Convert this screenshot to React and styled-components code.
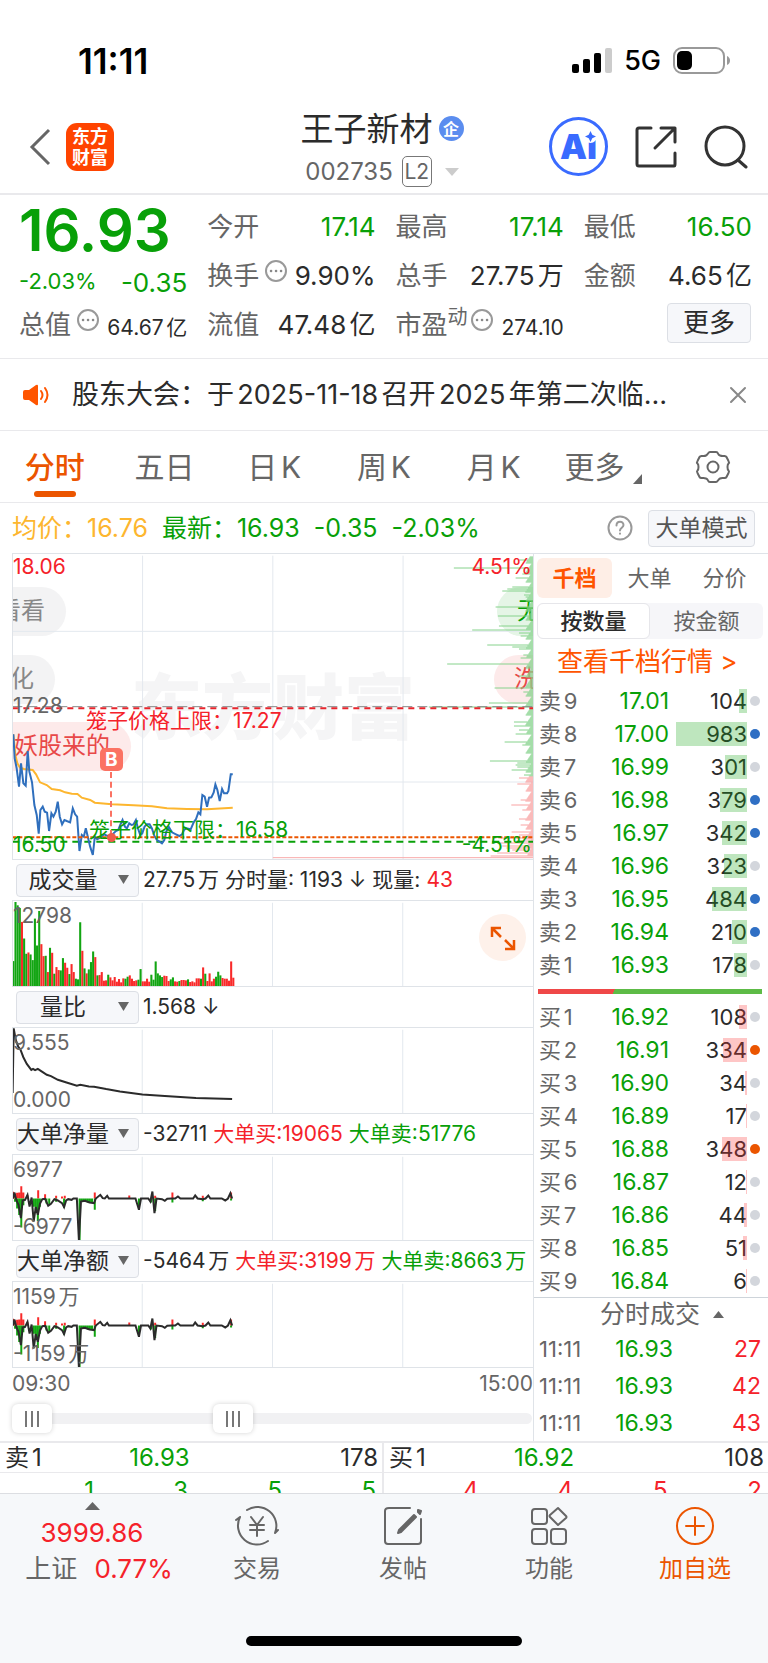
import React from "react";
import styled, { createGlobalStyle, css } from "styled-components";

const GREEN = "#08a008";
const RED = "#f5222a";
const ORANGE = "#eb5500";
const INK = "#2b2b2b";
const MUTED = "#666666";
const LINE = "#e9e9ec";

const Global = createGlobalStyle`
  *, *::before, *::after { box-sizing: border-box; }
  body {
    margin: 0;
    background: #fff;
    color: ${INK};
    font-family: Inter, "Noto Sans CJK SC", sans-serif;
    text-autospace: normal;
  }
  button, input, select { font: inherit; color: inherit; margin: 0; }
  button { border: 0; padding: 0; background: none; cursor: pointer; }
  a { color: inherit; text-decoration: none; }
`;

const Page = styled.div`
  display: flex;
  flex-direction: column;
  overflow: hidden;
`;

/* ---------- status bar ---------- */

const StatusBar = styled.div`
  display: flex;
  align-items: center;
  justify-content: space-between;
  height: 106px;
  padding: 16px 38px 0 78px;
  color: #000;
`;

const Clock = styled.time`
  font-size: 35px;
  line-height: 40px;
  font-weight: 600;
`;

const StatusIcons = styled.div`
  display: flex;
  align-items: center;
  gap: 12px;
  font-size: 27px;
  line-height: 32px;
  font-weight: 500;
`;

/* ---------- header ---------- */

const Header = styled.header`
  display: grid;
  grid-template-columns: 1fr auto 1fr;
  align-items: center;
  height: 89px;
  padding: 0 20px;
  border-bottom: 2px solid ${LINE};
`;

const HeaderSide = styled.div`
  display: flex;
  align-items: center;
  gap: ${(p) => p.$gap}px;
  justify-content: ${(p) => (p.$end ? "flex-end" : "flex-start")};
  padding: ${(p) => (p.$end ? "0 0 6px" : "0 0 6px 8px")};
`;

const IconButton = styled.button`
  display: flex;
  align-items: center;
  justify-content: center;
`;

const Logo = styled.a`
  display: flex;
  align-items: center;
  justify-content: center;
  width: 48px;
  height: 48px;
  border-radius: 11px;
  background: #ff4400;
  color: #fff;
  font-size: 18px;
  line-height: 21px;
  font-weight: 700;
  text-align: center;
`;

const TitleBlock = styled.div`
  display: flex;
  flex-direction: column;
  align-items: center;
  padding-right: 4px;
`;

const StockName = styled.h1`
  display: flex;
  align-items: center;
  gap: 6px;
  margin: 0;
  font-size: 33px;
  line-height: 44px;
  font-weight: 400;
`;

const CompanyBadge = styled.span`
  display: flex;
  align-items: center;
  justify-content: center;
  width: 25px;
  height: 25px;
  border-radius: 50%;
  background: #5b8def;
  color: #fff;
  font-size: 16px;
  line-height: 24px;
  font-weight: 700;
`;

const StockCode = styled.button`
  display: flex;
  align-items: center;
  gap: 9px;
  color: ${MUTED};
  font-size: 24px;
  line-height: 32px;
  height: 42px;
`;

const LevelTag = styled.span`
  width: 30px;
  height: 31px;
  border: 1px solid #777;
  border-radius: 5px;
  font-size: 21px;
  line-height: 29px;
  text-align: center;
`;

const CodeArrow = styled.svg`
  margin-left: 4px;
`;

const AiButton = styled.button`
  position: relative;
  width: 59px;
  height: 59px;
  border: 3px solid #3a6bff;
  border-radius: 50%;
  color: #3a6bff;
  font-size: 34px;
  line-height: 53px;
  font-weight: 900;
  svg {
    position: absolute;
    top: 10px;
    right: 8px;
  }
`;

/* ---------- quote ---------- */

const Quote = styled.section`
  display: grid;
  grid-template-columns: repeat(4, minmax(0, 1fr));
  grid-auto-rows: 49px;
  column-gap: 20px;
  padding: 7px 16px 9px 19px;
  border-bottom: 1px solid ${LINE};
`;

const Price = styled.div`
  padding-top: 4px;
  color: ${GREEN};
  font-size: 58px;
  line-height: 49px;
  font-weight: 600;
`;

const Change = styled.div`
  display: flex;
  align-items: center;
  justify-content: space-between;
  padding-top: 10px;
  color: ${GREEN};
  font-size: 22px;
  line-height: 32px;
`;

const BigChange = styled.span`
  padding-top: 4px;
  font-size: 26px;
`;

const Stat = styled.div`
  display: flex;
  align-items: center;
  justify-content: space-between;
  font-size: 26px;
  line-height: 40px;
  white-space: nowrap;
`;

const StatLabel = styled.span`
  display: flex;
  align-items: center;
  color: ${MUTED};
  svg { margin: 0 0 10px 5px; }
  small {
    font-size: 20px;
    line-height: 24px;
    margin-bottom: 16px;
  }
  small + svg { margin-left: 2px; }
`;

const StatValue = styled.span`
  color: ${(p) => (p.$down ? GREEN : INK)};
  ${(p) =>
    p.$small &&
    css`
      padding-top: 6px;
      font-size: 21px;
    `}
`;

const MoreButton = styled.button`
  justify-self: end;
  align-self: center;
  width: 84px;
  height: 40px;
  margin: 0 1px 4px 0;
  border: 1px solid #dcdfe5;
  border-radius: 4px;
  background: #f6f7fa;
  font-size: 26px;
  line-height: 36px;
`;

/* ---------- notice ---------- */

const Notice = styled.section`
  display: flex;
  align-items: center;
  height: 72px;
  padding: 0 20px 0 22px;
  border-bottom: 1px solid ${LINE};
`;

const NoticeText = styled.a`
  flex: 1;
  min-width: 0;
  margin: 0 58px 0 22px;
  overflow: hidden;
  white-space: nowrap;
  text-overflow: ellipsis;
  font-size: 27px;
  line-height: 40px;
`;

/* ---------- period tabs ---------- */

const Periods = styled.nav`
  display: grid;
  grid-template-columns: repeat(7, 1fr);
  justify-items: center;
  align-items: center;
  height: 72px;
  border-bottom: 1px solid ${LINE};
`;

const Period = styled.button`
  position: relative;
  display: flex;
  align-items: center;
  gap: 9px;
  color: ${(p) => (p.$active ? ORANGE : MUTED)};
  font-size: 30px;
  font-weight: ${(p) => (p.$active ? 500 : 400)};
  line-height: 66px;
  &::after {
    content: ${(p) => (p.$active ? '""' : "none")};
    position: absolute;
    left: 50%;
    bottom: 3px;
    width: 42px;
    height: 6px;
    margin-left: -21px;
    border-radius: 3px;
    background: ${ORANGE};
  }
`;

const CornerMark = styled.svg`
  margin-top: 24px;
`;

const Averages = styled.div`
  display: flex;
  align-items: center;
  height: 50px;
  padding: 0 13px 0 12px;
  color: ${GREEN};
  font-size: 25px;
  line-height: 36px;
`;

const AverageItem = styled.span`
  margin-right: 14px;
  color: ${(p) => (p.$average ? "#fdb62f" : GREEN)};
`;

const HelpButton = styled(IconButton)`
  margin: 0 15px 0 auto;
`;

const ModeButton = styled.button`
  width: 107px;
  height: 37px;
  border: 1px solid #dcdfe5;
  border-radius: 4px;
  background: #f6f7fa;
  color: #555;
  font-size: 23px;
  line-height: 34px;
  white-space: nowrap;
`;

/* ---------- body ---------- */

const Body = styled.main`
  display: flex;
  align-items: stretch;
`;

const Charts = styled.section`
  flex: 1;
  min-width: 0;
  padding-left: 12px;
`;

const ChartBox = styled.div`
  position: relative;
  height: ${(p) => p.$height}px;
  overflow: hidden;
  border: solid #dfe3e8;
  border-width: 1px 0 1px 1px;
`;

const ChartSvg = styled.svg`
  position: relative;
  display: block;
  width: 100%;
  height: 100%;
  path, line, polyline { vector-effect: non-scaling-stroke; fill: none; }
`;

const AxisLabel = styled.span`
  position: absolute;
  ${(p) => (p.$right ? "right: 1px;" : "left: 0;")}
  top: ${(p) => p.$top}px;
  color: ${(p) => p.$color || MUTED};
  font-size: 21px;
  line-height: 24px;
  white-space: nowrap;
`;

const CageLabel = styled(AxisLabel)`
  left: ${(p) => p.$left}px;
`;

const Watermark = styled.span`
  position: absolute;
  left: 50%;
  top: 113px;
  margin-left: -142px;
  color: #f5f5f6;
  font-size: 71px;
  line-height: 80px;
  font-weight: 900;
  white-space: nowrap;
`;

const Bullet = styled.span`
  position: absolute;
  top: ${(p) => p.$top}px;
  ${(p) => (p.$right ? "right: 0;" : "left: 0;")}
  width: ${(p) => p.$width}px;
  height: 49px;
  overflow: hidden;
  display: flex;
  justify-content: ${(p) => (p.$right ? "flex-start" : "flex-end")};
  padding: ${(p) => (p.$right ? "0 0 0 20px" : "0 21px 0 0")};
  border-radius: ${(p) => (p.$right ? "25px 0 0 25px" : "0 25px 25px 0")};
  background: ${(p) => p.$bg};
  color: ${(p) => p.$color};
  font-size: 24px;
  line-height: 48px;
  white-space: nowrap;
`;

const BuyMark = styled.span`
  position: absolute;
  left: 19%;
  top: 194px;
  width: 23px;
  height: 23px;
  margin-left: -12px;
  border-radius: 5px;
  background: #fb7263;
  color: #fff;
  font-size: 19px;
  line-height: 23px;
  font-weight: 700;
  text-align: center;
  &::before {
    content: "";
    position: absolute;
    left: 10px;
    top: 24px;
    height: 64px;
    border-left: 2px dashed #fb7263;
  }
  &::after {
    content: "";
    position: absolute;
    left: 7px;
    top: 85px;
    width: 9px;
    height: 9px;
    border-radius: 50%;
    background: #f05a4a;
  }
`;

const IndicatorBar = styled.div`
  display: flex;
  align-items: center;
  height: 40px;
  padding-left: 4px;
  font-size: 21px;
  line-height: 30px;
  white-space: nowrap;
`;

const SelectWrap = styled.label`
  position: relative;
  flex: none;
  width: 123px;
  height: 33px;
  margin-right: 4px;
  svg {
    position: absolute;
    right: 10px;
    top: 11px;
    pointer-events: none;
  }
`;

const Select = styled.select`
  appearance: none;
  width: 100%;
  height: 100%;
  padding: 0 29px 0 0;
  border: 1px solid #dcdfe5;
  border-radius: 4px;
  background: #f6f7fa;
  font-size: 23px;
  line-height: 30px;
  text-align-last: center;
`;

const Reading = styled.span`
  margin-right: 6px;
  color: ${(p) => p.$color || INK};
`;

const ExpandButton = styled(IconButton)`
  position: absolute;
  right: 7px;
  top: 13px;
  width: 47px;
  height: 47px;
  border-radius: 50%;
  background: #fef1ea;
`;

const TimeAxis = styled.div`
  display: flex;
  justify-content: space-between;
  color: ${MUTED};
  font-size: 21px;
  line-height: 32px;
`;

const RangeTrack = styled.div`
  position: relative;
  height: 29px;
  margin: 4px 1px 6px 0;
  &::before {
    content: "";
    position: absolute;
    inset: 9px 0 9px 0;
    border-radius: 6px;
    background: #f1f1f3;
  }
`;

const RangeInput = styled.input`
  appearance: none;
  position: absolute;
  inset: 0;
  width: 100%;
  height: 29px;
  background: none;
  pointer-events: none;
  &::-webkit-slider-thumb {
    appearance: none;
    pointer-events: auto;
    width: 40px;
    height: 29px;
    border-radius: 6px;
    box-shadow: 0 0 5px rgba(0, 0, 0, 0.18);
    background:
      linear-gradient(#777, #777) 13px 7px / 2px 16px no-repeat,
      linear-gradient(#777, #777) 19px 7px / 2px 16px no-repeat,
      linear-gradient(#777, #777) 25px 7px / 2px 16px no-repeat,
      #fff;
  }
`;

/* ---------- order book ---------- */

const Book = styled.aside`
  flex: none;
  width: 235px;
  border-left: 1px solid #dfe3e8;
  border-top: 1px solid #dfe3e8;
`;

const BookTabs = styled.div`
  display: grid;
  grid-template-columns: repeat(3, 75px);
  justify-content: space-between;
  padding: 4px 9px 5px 3px;
`;

const BookTab = styled.button`
  height: 40px;
  border-radius: 6px;
  background: ${(p) => (p.$active ? "#feeee6" : "none")};
  color: ${(p) => (p.$active ? "#ff5500" : MUTED)};
  font-size: 22px;
  font-weight: ${(p) => (p.$active ? 700 : 400)};
  line-height: 38px;
`;

const Toggle = styled.div`
  display: grid;
  grid-template-columns: 1fr 1fr;
  height: 36px;
  margin: 0 5px 0 3px;
  border-radius: 6px;
  background: #f6f6f9;
`;

const ToggleButton = styled.button`
  border: 1px solid ${(p) => (p.$active ? "#e6e6ea" : "transparent")};
  border-radius: 6px;
  background: ${(p) => (p.$active ? "#fff" : "none")};
  color: ${(p) => (p.$active ? INK : MUTED)};
  font-size: 22px;
  font-weight: ${(p) => (p.$active ? 500 : 400)};
  line-height: 32px;
`;

const DepthLink = styled.a`
  display: block;
  padding-left: 23px;
  color: #ff5500;
  font-size: 26px;
  line-height: 45px;
  white-space: nowrap;
`;

const BookTable = styled.table`
  width: 100%;
  border-collapse: collapse;
  table-layout: fixed;
  font-size: 22px;
  line-height: 32px;
  td, th { padding: 0; font-weight: 400; text-align: right; height: ${(p) => p.$row}px; }
`;

const LevelCell = styled.th`
  width: 52px;
  padding-left: 5px !important;
  text-align: left !important;
  color: ${MUTED};
  white-space: nowrap;
`;

const PriceCell = styled.td`
  width: ${(p) => p.$width}px;
  color: ${GREEN};
  font-size: 23px;
`;

const DotCell = styled.td`
  width: 21px;
  &::after {
    content: "";
    display: block;
    width: 10px;
    height: 10px;
    margin-left: 3px;
    border-radius: 50%;
    background: ${(p) => p.$color};
  }
`;

const Quantity = styled.div`
  position: relative;
  height: 24px;
  line-height: 24px;
`;

const QuantityBar = styled.i`
  position: absolute;
  top: 0;
  right: 0;
  height: 24px;
  background: ${(p) => (p.$sell ? "rgba(20, 165, 20, 0.28)" : "rgba(250, 50, 50, 0.28)")};
`;

const Ratio = styled.div`
  height: 5px;
  margin: 8px 6px 6px 4px;
  background: linear-gradient(120deg, #ef4848 34%, #5dbb46 34%);
`;

const TradesHeader = styled.button`
  display: flex;
  align-items: center;
  justify-content: center;
  gap: 13px;
  width: 100%;
  height: 33px;
  padding-left: 22px;
  border-top: 1px solid #ced4da;
  color: ${MUTED};
  font-size: 25px;
  line-height: 30px;
`;

const TradeQty = styled.td`
  padding-right: 7px !important;
  color: ${RED};
  font-size: 23px;
`;

/* ---------- best quotes ---------- */

const Best = styled.section`
  display: grid;
  grid-template-columns: 1fr 1fr;
  border-top: 2px solid ${LINE};
`;

const BestSide = styled.div`
  border-right: ${(p) => (p.$divider ? `2px solid ${LINE}` : "0")};
`;

const BestRow = styled.div`
  display: grid;
  grid-template-columns: 1fr 1fr 1fr;
  padding: 0 4px 0 5px;
  border-bottom: 1px solid ${LINE};
  font-size: 24px;
  line-height: 29px;
  span:nth-child(2) { color: ${GREEN}; }
  span:last-child { text-align: right; }
`;

const QueueRow = styled.div`
  display: grid;
  grid-template-columns: repeat(4, 1fr);
  height: 20px;
  padding-right: 6px;
  overflow: hidden;
  color: ${(p) => p.$color};
  font-size: 24px;
  line-height: 36px;
  text-align: right;
`;

/* ---------- bottom bar ---------- */

const BottomBar = styled.footer`
  border-top: 1px solid #dcdee2;
  background: #f6f8fa;
`;

const Actions = styled.nav`
  display: grid;
  grid-template-columns: 184fr 146fr 146fr 146fr 146fr;
  height: 142px;
  align-items: start;
`;

const Action = styled.button`
  display: flex;
  flex-direction: column;
  align-items: center;
  padding-top: 10px;
  color: ${(p) => (p.$accent ? ORANGE : MUTED)};
  font-size: 24px;
  line-height: 36px;
  svg { margin-bottom: 3px; }
`;

const IndexSummary = styled.button`
  display: flex;
  flex-direction: column;
  align-items: center;
  padding-top: 8px;
  color: ${RED};
  font-size: 26px;
  line-height: 36px;
`;

const IndexValue = styled.span`
  margin: 6px 0 1px;
  line-height: 34px;
`;

const IndexChange = styled.span`
  padding-left: 14px;
`;

const IndexName = styled.span`
  margin-right: 14px;
  color: ${MUTED};
`;

const HomeIndicator = styled.div`
  width: 36%;
  height: 10px;
  margin: 0 auto 17px;
  border-radius: 5px;
  background: #000;
`;

/* ---------- icons ---------- */

const Stroke = ({ size, width = 2, children, ...rest }) => (
  <svg
    width={size}
    height={size}
    viewBox={`0 0 ${size} ${size}`}
    fill="none"
    stroke="currentColor"
    strokeWidth={width}
    strokeLinecap="round"
    strokeLinejoin="round"
    aria-hidden="true"
    {...rest}
  >
    {children}
  </svg>
);

const BackIcon = () => (
  <svg width="24" height="38" viewBox="0 0 24 38" fill="none" stroke="#666" strokeWidth="3" aria-hidden="true">
    <path d="M21 2 4 19l17 17" />
  </svg>
);

const SignalIcon = () => (
  <svg width="40" height="26" viewBox="0 0 40 26" aria-hidden="true">
    <rect x="0" y="16" width="7" height="9" rx="2" />
    <rect x="11" y="11" width="7" height="14" rx="2" />
    <rect x="22" y="5" width="7" height="20" rx="2" />
    <rect x="33" y="0" width="7" height="25" rx="2" fill="#ccc" />
  </svg>
);

const BatteryIcon = () => (
  <svg width="57" height="28" viewBox="0 0 57 28" aria-hidden="true">
    <rect x="1" y="1" width="50" height="25" rx="8" fill="none" stroke="#999" strokeWidth="2" />
    <rect x="4" y="4" width="15" height="19" rx="5" />
    <path d="M54 9q3 1.500 3 4.500t-3 4.500z" fill="#999" />
  </svg>
);

const ShareIcon = () => (
  <Stroke size={42} width={3}>
    <path d="M16 2H4q-2 0-2 2v34q0 2 2 2h35q1 0 1-2V27M26 2h14v14M39 3 20 22" stroke="#333" />
  </Stroke>
);

const SearchIcon = () => (
  <Stroke size={44} width={3}>
    <circle cx="21" cy="21" r="19" stroke="#333" />
    <path d="m34 35 8 7" stroke="#333" />
  </Stroke>
);

const InfoIcon = () => (
  <Stroke size={24} width={2}>
    <circle cx="12" cy="12" r="10" stroke="#999" />
    <path d="M7 12h.1M12 12h.1M17 12h.1" stroke="#888" strokeWidth="2.500" />
  </Stroke>
);

const SpeakerIcon = () => (
  <svg width="28" height="24" viewBox="0 0 28 24" aria-hidden="true">
    <path d="M1 9q0-2 2-2h4l7-5q2-1 2 1v18q0 2-2 1l-7-5H3q-2 0-2-2z" fill="#ff5500" />
    <path d="M19 8q3 4 0 8M23 5q5 7 0 14" fill="none" stroke="#ff5500" strokeWidth="2" strokeLinecap="round" />
  </svg>
);

const CloseIcon = () => (
  <Stroke size={20} width={2}>
    <path d="m3 3 14 14M17 3 3 17" stroke="#888" />
  </Stroke>
);

const GearIcon = () => (
  <Stroke size={36} width={2}>
    <path d="M15 3h6q1.500 0 2 1.500t2 2 2.500.5h2q1.500 0 2 1l2 4q1 1.500 0 2.500t-1 3.500 1 3.500 0 2.500l-2 4q-.5 1-2 1h-2q-1.500 0-2.500.5t-2 2T21 33h-6q-1.500 0-2-1.500t-2-2-2.500-.5h-2q-1.500 0-2-1l-2-4q-1-1.500 0-2.500t1-3.500-1-3.500 0-2.500l2-4q.5-1 2-1h2q1.500 0 2.500-.5t2-2T15 3z" />
    <circle cx="18" cy="18" r="5.500" />
  </Stroke>
);

const HelpIcon = () => (
  <Stroke size={26} width={2}>
    <circle cx="13" cy="13" r="11.500" stroke="#999" />
    <path d="M9.500 10.500c0-5 7-5 7-.5 0 2.500-3.500 3-3.500 5.500M13 18.500v.2" stroke="#999" />
  </Stroke>
);

const ExpandIcon = () => (
  <svg width="26" height="26" viewBox="0 0 26 26" fill="none" stroke={ORANGE} strokeWidth="2.500" aria-hidden="true">
    <path d="M2 12V3h9M3 4l8 8M24 15v9h-9M23 23l-8-8" />
  </svg>
);

const Triangle = ({ up, width = 11, height = 9, color = MUTED }) => (
  <svg width={width} height={height} viewBox="0 0 10 8" preserveAspectRatio="none" aria-hidden="true">
    <path d={up ? "M0 8h10L5 0z" : "M0 0h10L5 8z"} fill={color} />
  </svg>
);

const TradeIcon = () => (
  <Stroke size={44} width={2}>
    <path d="M12 6a19 19 0 0 1 28 23l3-3M33 37A19 19 0 0 1 5 13l-4 3" />
    <path d="m16 13 6 8 6-8M22 21v11M15 21h14M15 26h14" />
  </Stroke>
);

const PostIcon = () => (
  <Stroke size={44} width={2}>
    <path d="M29 4H8Q4 4 4 7v30q0 3 3 3h30q3 0 3-3V15" />
    <path d="m18 26-1 3 3-1 15-15-2-2zM37 6l3 1-1 3-2-2z" fill="currentColor" />
  </Stroke>
);

const GridIcon = () => (
  <Stroke size={44} width={2}>
    <rect x="5" y="5" width="15" height="15" rx="3" />
    <rect x="5" y="25" width="15" height="15" rx="3" />
    <rect x="24" y="25" width="15" height="15" rx="3" />
    <path d="m31 4 8 8q1 1 0 2l-8 7-8-8q-1-1 0-2z" />
  </Stroke>
);

const AddIcon = () => (
  <Stroke size={44} width={2}>
    <circle cx="22" cy="22" r="18" />
    <path d="M22 13v18M13 22h18" />
  </Stroke>
);

/* ---------- chart data ---------- */

const PRICE_LINE =
  "40,568 44,640 50,670 57,725 63,655 70,715 77,722 83,618 88,680 96,712 103,780 110,810 116,866 121,795 128,785 134,800 141,803 147,858 154,805 160,815 167,800 173,770 179,815 186,838 193,825 200,828 210,832 218,790 225,808 231,815 238,918 245,870 251,875 257,850 264,880 270,905 278,930 284,875 291,883 300,878 312,868 320,872 330,878 340,865 347,858 354,855 360,840 367,825 374,845 380,850 387,835 394,840 400,838 407,825 413,850 420,870 426,865 433,845 440,838 448,838 455,850 462,872 470,885 478,890 485,895 492,885 498,860 505,845 515,862 527,868 537,873 545,868 551,855 558,850 571,853 580,832 587,822 594,802 600,808 606,750 613,755 620,785 626,758 633,757 640,742 645,718 651,735 658,768 665,732 671,745 680,745 684,738 691,688 697,688";

const AVERAGE_LINE =
  "40,568 46,630 52,655 60,668 72,672 98,675 108,688 120,712 140,720 155,732 180,736 195,742 215,746 232,747 245,758 270,765 284,773 335,778 400,781 455,784 500,790 560,792 620,793 697,788";

const RATIO_LINE =
  "39,700 42,505 48,540 55,560 62,570 70,592 80,612 93,630 98,627 104,631 112,627 125,636 138,645 150,649 170,660 195,668 225,678 235,675 260,680 275,681 310,688 350,695 415,704 480,709 570,715 675,718";

const NET_LINE =
  "40,206 44,188 50,212 56,225 63,265 68,212 75,210 82,195 88,230 94,203 100,275 106,232 112,255 118,222 125,208 133,207 142,228 150,222 160,208 170,212 182,220 188,232 194,212 200,208 210,210 215,206 225,206 231,332 237,215 248,213 262,218 275,220 280,206 293,195 300,205 306,206 313,198 318,206 395,206 405,240 411,206 432,206 438,215 444,185 450,250 456,206 472,208 480,213 487,207 500,206 510,206 518,200 525,206 562,206 568,197 575,206 590,208 598,206 606,197 612,206 645,206 655,212 663,206 670,190 675,206";

const NET_BUY = [
  [40, 20], [46, 15], [52, 17], [58, 18], [64, 37], [70, 18], [82, 10], [113, 25], [133, 13], [165, 8],
  [182, 6], [190, 8], [277, 18], [377, 9], [452, 8], [502, 18], [590, 8], [672, 18],
];

const NET_SELL = [
  [46, 10], [52, 30], [58, 50], [64, 87], [70, 20], [100, 25], [106, 35], [112, 68], [118, 25], [137, 15],
  [145, 17], [165, 10], [188, 28], [233, 126], [239, 10], [245, 9], [251, 10], [257, 12], [263, 12],
  [269, 13], [277, 34], [405, 28], [440, 12], [452, 38], [502, 12], [590, 8], [672, 6],
];

const VOLUMES =
  "g75 g253 g243 g235 r193 g143 g97 r101 g95 g78 g203 g122 g226 r126 r90 g91 r42 g115 r100 g37 r57 r48 g47 g84 r70 r55 g36 r66 r42 g22 g20 g192 r106 g53 r38 g50 g72 g104 r87 g32 r33 r42 r16 r17 g34 r26 r17 r27 r13 r21 r11 r23 g22 g28 r32 r22 r15 r17 g19 g51 r14 r14 r22 r13 g34 g19 g74 g38 g32 g27 r31 r30 r15 g20 g26 r14 r13 g15 r18 r18 r17 g20 r12 r14 r11 r23 r23 g22 r56 g37 r15 r38 r14 r22 g28 g43 g32 r24 r22 r22 r16 r74 r25".split(" ");

const DEPTH_SELL = {
  45: 42, 69: 237, 87: 32, 99: 52, 126: 62, 132: 77, 138: 92, 150: 27, 156: 22, 186: 112, 213: 105, 243: 102,
  255: 182, 264: 42, 273: 37, 300: 137, 306: 62, 312: 42, 330: 29, 339: 37, 357: 257, 393: 42, 429: 115,
  441: 29, 474: 132, 486: 312, 531: 57, 543: 57, 555: 42, 567: 52, 591: 85, 600: 32, 648: 129, 654: 47,
  660: 52, 666: 47, 675: 64, 690: 27,
};

const DEPTH_BUY = {
  699: 42, 717: 47, 765: 37, 780: 65, 795: 32, 822: 42, 840: 37, 861: 64, 870: 42, 879: 97, 888: 47,
  894: 107, 903: 92, 909: 80, 915: 62, 924: 107, 933: 127,
};

const depthLines = (from, to, peaks) => {
  const lines = [];
  for (let y = from; y < to; y += 3) {
    const length = peaks[y] || 5 + ((y * 7) % 19);
    lines.push(`M1596 ${y}h${-length}`);
  }
  return lines.join("");
};

const SELL_ORDERS = [
  [9, "17.01", 104, false], [8, "17.00", 983, true], [7, "16.99", 301, false],
  [6, "16.98", 379, true], [5, "16.97", 342, true], [4, "16.96", 323, false],
  [3, "16.95", 484, true], [2, "16.94", 210, true], [1, "16.93", 178, false],
];

const BUY_ORDERS = [
  [1, "16.92", 108, false], [2, "16.91", 334, true], [3, "16.90", 34, false],
  [4, "16.89", 17, false], [5, "16.88", 348, true], [6, "16.87", 12, false],
  [7, "16.86", 44, false], [8, "16.85", 51, false], [9, "16.84", 6, false],
];

const TRADES = [27, 42, 43];
const INDICATORS = ["成交量", "量比", "大单净量", "大单净额"];

/* ---------- composed parts ---------- */

const GridLines = ({ x, width, y, height }) => (
  <path
    stroke="#e3e8ee"
    strokeWidth="1"
    d={[1, 2, 3].map((n) => `M${x + (width * n) / 4} ${y + 8}V${y + height}`).join("")}
  />
);

const PriceChart = () => (
  <ChartBox $height={307}>
    <Watermark>东方财富</Watermark>
    <Bullet $top={33} $width={53} $bg="#f3f3f4" $color="#888">看看</Bullet>
    <Bullet $top={101} $width={42} $bg="#f3f3f4" $color="#888">化</Bullet>
    <Bullet $top={168} $width={118} $bg="#fdeaea" $color="#e84848">妖股来的</Bullet>
    <Bullet $right $top={33} $width={36} $bg="#e5f5e6" $color={GREEN}>无</Bullet>
    <Bullet $right $top={101} $width={39} $bg="#fdeaea" $color="#e84848">洗</Bullet>
    <ChartSvg viewBox="39 27 1557 915" preserveAspectRatio="none" role="img" aria-label="分时走势">
      <GridLines x={37} width={1560} y={24} height={918} />
      <path d="M37 259H1596M37 711H1596" stroke="#e3e8ee" />
      <path d={depthLines(36, 696, DEPTH_SELL)} stroke="#86d28c" />
      <path d={depthLines(696, 936, DEPTH_BUY)} stroke="#f9a3a3" />
      <path d="M817 938H1596" stroke="#f8aaaa" />
      <path d="M37 485H1596" stroke="#888" strokeDasharray="10 5" />
      <path d="M37 490H1596" stroke="#e8252c" strokeWidth="2" strokeDasharray="6 5" />
      <path d="M37 890H1596" stroke="#08a008" strokeWidth="2" strokeDasharray="7 5" />
      <polyline points={AVERAGE_LINE} stroke="#fdb62f" strokeWidth="2" />
      <polyline points={PRICE_LINE} stroke="#2f6fbd" strokeWidth="2" />
      <path d="M37 877H1596" stroke={ORANGE} strokeWidth="2" strokeDasharray="4 2" />
    </ChartSvg>
    <AxisLabel $top={1} $color={RED}>18.06</AxisLabel>
    <AxisLabel $right $top={1} $color={RED}>4.51%</AxisLabel>
    <AxisLabel $top={140}>17.28</AxisLabel>
    <AxisLabel $top={279} $color={GREEN}>16.50</AxisLabel>
    <AxisLabel $right $top={279} $color={GREEN}>-4.51%</AxisLabel>
    <CageLabel $left={73} $top={155} $color={RED}>笼子价格上限：17.27</CageLabel>
    <CageLabel $left={76} $top={264} $color={GREEN}>笼子价格下限：16.58</CageLabel>
    <BuyMark>B</BuyMark>
  </ChartBox>
);

const Indicator = ({ name, readings, children }) => (
  <>
    <IndicatorBar>
      <SelectWrap>
        <Select defaultValue={name} aria-label={`指标 ${name}`}>
          {INDICATORS.map((item) => (
            <option key={item}>{item}</option>
          ))}
        </Select>
        <Triangle />
      </SelectWrap>
      {readings.map(([text, color]) => (
        <Reading key={text} $color={color}>{text}</Reading>
      ))}
    </IndicatorBar>
    <ChartBox $height={87}>{children}</ChartBox>
  </>
);

const NetChart = ({ high, low }) => (
  <>
    <ChartSvg viewBox="40 75 1507 256" preserveAspectRatio="none" aria-hidden="true">
      <GridLines x={37} width={1510} y={72} height={262} />
      <path strokeWidth="2" stroke="#f92a2a" d={NET_BUY.map(([x, h]) => `M${x} 206v${-h}`).join("")} />
      <path strokeWidth="2" stroke="#12a512" d={NET_SELL.map(([x, h]) => `M${x} 206v${h}`).join("")} />
      <polyline points={NET_LINE} stroke={INK} strokeWidth="2" />
    </ChartSvg>
    <AxisLabel $top={3}>{high}</AxisLabel>
    <AxisLabel $top={60}>{low}</AxisLabel>
  </>
);

const Orders = ({ side, orders, sell }) => (
  <BookTable $row={33} aria-label={side}>
    <tbody>
      {orders.map(([level, price, quantity, hot]) => (
        <tr key={level}>
          <LevelCell scope="row">{side}{level}</LevelCell>
          <PriceCell $width={83}>{price}</PriceCell>
          <td>
            <Quantity>
              {quantity}
              <QuantityBar $sell={sell} style={{ width: Math.max(1, Math.round((quantity / 983) * 71)) }} />
            </Quantity>
          </td>
          <DotCell $color={hot ? (sell ? "#2f6fc4" : ORANGE) : "#d3d6dc"} />
        </tr>
      ))}
    </tbody>
  </BookTable>
);

export default function App() {
  return (
    <Page>
      <Global />
      <StatusBar>
        <Clock>11:11</Clock>
        <StatusIcons>
          <SignalIcon />
          5G
          <BatteryIcon />
        </StatusIcons>
      </StatusBar>

      <Header>
        <HeaderSide $gap={14}>
          <IconButton aria-label="返回"><BackIcon /></IconButton>
          <Logo href="#home">东方<br />财富</Logo>
        </HeaderSide>
        <TitleBlock>
          <StockName>王子新材<CompanyBadge>企</CompanyBadge></StockName>
          <StockCode>
            002735<LevelTag>L2</LevelTag>
            <CodeArrow width="14" height="8" viewBox="0 0 14 8" aria-hidden="true">
              <path d="M0 0h14L7 8z" fill="#ccc" />
            </CodeArrow>
          </StockCode>
        </TitleBlock>
        <HeaderSide $end $gap={27}>
          <AiButton>
            Ai
            <svg width="13" height="13" viewBox="0 0 13 13" aria-hidden="true">
              <circle cx="6.500" cy="6.500" r="6.500" fill="#fff" />
              <path d="m6.500 1 1.800 3.700L12 6.500 8.300 8.300 6.500 12 4.700 8.300 1 6.500l3.700-1.800z" fill="#3a6bff" />
            </svg>
          </AiButton>
          <IconButton aria-label="分享"><ShareIcon /></IconButton>
          <IconButton aria-label="搜索"><SearchIcon /></IconButton>
        </HeaderSide>
      </Header>

      <Quote>
        <Price>16.93</Price>
        <Stat><StatLabel>今开</StatLabel><StatValue $down>17.14</StatValue></Stat>
        <Stat><StatLabel>最高</StatLabel><StatValue $down>17.14</StatValue></Stat>
        <Stat><StatLabel>最低</StatLabel><StatValue $down>16.50</StatValue></Stat>
        <Change><span>-2.03%</span><BigChange>-0.35</BigChange></Change>
        <Stat><StatLabel>换手<InfoIcon /></StatLabel><StatValue>9.90%</StatValue></Stat>
        <Stat><StatLabel>总手</StatLabel><StatValue>27.75万</StatValue></Stat>
        <Stat><StatLabel>金额</StatLabel><StatValue>4.65亿</StatValue></Stat>
        <Stat><StatLabel>总值<InfoIcon /></StatLabel><StatValue $small>64.67亿</StatValue></Stat>
        <Stat><StatLabel>流值</StatLabel><StatValue>47.48亿</StatValue></Stat>
        <Stat>
          <StatLabel>市盈<small>动</small><InfoIcon /></StatLabel>
          <StatValue $small>274.10</StatValue>
        </Stat>
        <MoreButton>更多</MoreButton>
      </Quote>

      <Notice>
        <SpeakerIcon />
        <NoticeText href="#notice">股东大会：于2025-11-18召开2025年第二次临时股东大会</NoticeText>
        <IconButton aria-label="关闭"><CloseIcon /></IconButton>
      </Notice>

      <Periods>
        <Period $active>分时</Period>
        <Period>五日</Period>
        <Period>日K</Period>
        <Period>周K</Period>
        <Period>月K</Period>
        <Period>
          更多
          <CornerMark width="9" height="10" viewBox="0 0 9 10" aria-hidden="true">
            <path d="M9 0v10H0z" fill={MUTED} />
          </CornerMark>
        </Period>
        <Period aria-label="设置"><GearIcon /></Period>
      </Periods>

      <Averages>
        <AverageItem $average>均价：16.76</AverageItem>
        <AverageItem>最新：16.93</AverageItem>
        <AverageItem>-0.35</AverageItem>
        <AverageItem>-2.03%</AverageItem>
        <HelpButton aria-label="帮助"><HelpIcon /></HelpButton>
        <ModeButton>大单模式</ModeButton>
      </Averages>

      <Body>
        <Charts>
          <PriceChart />
          <Indicator name="成交量" readings={[["27.75万"], ["分时量: 1193 ↓"], ["现量:"], ["43", RED]]}>
            <ChartSvg viewBox="40 122 1507 256" preserveAspectRatio="none" aria-hidden="true">
              <GridLines x={37} width={1510} y={119} height={262} />
              {VOLUMES.map((bar, i) => (
                <rect
                  key={i}
                  x={38 + i * 6.25}
                  y={378 - Number(bar.slice(1))}
                  width="6"
                  height={bar.slice(1)}
                  fill={bar[0] === "g" ? "#12a512" : "#f92a2a"}
                />
              ))}
            </ChartSvg>
            <AxisLabel $top={3}>12798</AxisLabel>
            <ExpandButton aria-label="展开"><ExpandIcon /></ExpandButton>
          </Indicator>
          <Indicator name="量比" readings={[["1.568 ↓"]]}>
            <ChartSvg viewBox="40 504 1507 256" preserveAspectRatio="none" aria-hidden="true">
              <GridLines x={37} width={1510} y={501} height={262} />
              <polyline points={RATIO_LINE} stroke={INK} strokeWidth="2" />
            </ChartSvg>
            <AxisLabel $top={3}>9.555</AxisLabel>
            <AxisLabel $top={60}>0.000</AxisLabel>
          </Indicator>
          <Indicator name="大单净量" readings={[["-32711"], ["大单买:19065", RED], ["大单卖:51776", GREEN]]}>
            <NetChart high="6977" low="-6977" />
          </Indicator>
          <Indicator name="大单净额" readings={[["-5464万"], ["大单买:3199万", RED], ["大单卖:8663万", GREEN]]}>
            <NetChart high="1159万" low="-1159万" />
          </Indicator>
          <TimeAxis><span>09:30</span><span>15:00</span></TimeAxis>
          <RangeTrack>
            <RangeInput type="range" aria-label="开始时间" min="0" max="1000" defaultValue="0" />
            <RangeInput type="range" aria-label="结束时间" min="0" max="1000" defaultValue="419" />
          </RangeTrack>
        </Charts>

        <Book>
          <BookTabs>
            <BookTab $active>千档</BookTab>
            <BookTab>大单</BookTab>
            <BookTab>分价</BookTab>
          </BookTabs>
          <Toggle>
            <ToggleButton $active>按数量</ToggleButton>
            <ToggleButton>按金额</ToggleButton>
          </Toggle>
          <DepthLink href="#depth">查看千档行情 &gt;</DepthLink>
          <Orders side="卖" orders={SELL_ORDERS} sell />
          <Ratio />
          <Orders side="买" orders={BUY_ORDERS} />
          <TradesHeader>分时成交<Triangle up width={11} height={7} /></TradesHeader>
          <BookTable $row={37} aria-label="分时成交">
            <tbody>
              {TRADES.map((quantity) => (
                <tr key={quantity}>
                  <LevelCell scope="row">11:11</LevelCell>
                  <PriceCell $width={87}>16.93</PriceCell>
                  <TradeQty>{quantity}</TradeQty>
                </tr>
              ))}
            </tbody>
          </BookTable>
        </Book>
      </Body>

      <Best>
        <BestSide $divider>
          <BestRow><span>卖1</span><span>16.93</span><span>178</span></BestRow>
          <QueueRow $color={GREEN}><span>1</span><span>3</span><span>5</span><span>5</span></QueueRow>
        </BestSide>
        <BestSide>
          <BestRow><span>买1</span><span>16.92</span><span>108</span></BestRow>
          <QueueRow $color={RED}><span>4</span><span>4</span><span>5</span><span>2</span></QueueRow>
        </BestSide>
      </Best>

      <BottomBar>
        <Actions>
          <IndexSummary>
            <Triangle up width={15} height={8} />
            <IndexValue>3999.86</IndexValue>
            <IndexChange><IndexName>上证</IndexName>0.77%</IndexChange>
          </IndexSummary>
          <Action><TradeIcon />交易</Action>
          <Action><PostIcon />发帖</Action>
          <Action><GridIcon />功能</Action>
          <Action $accent><AddIcon />加自选</Action>
        </Actions>
        <HomeIndicator />
      </BottomBar>
    </Page>
  );
}
